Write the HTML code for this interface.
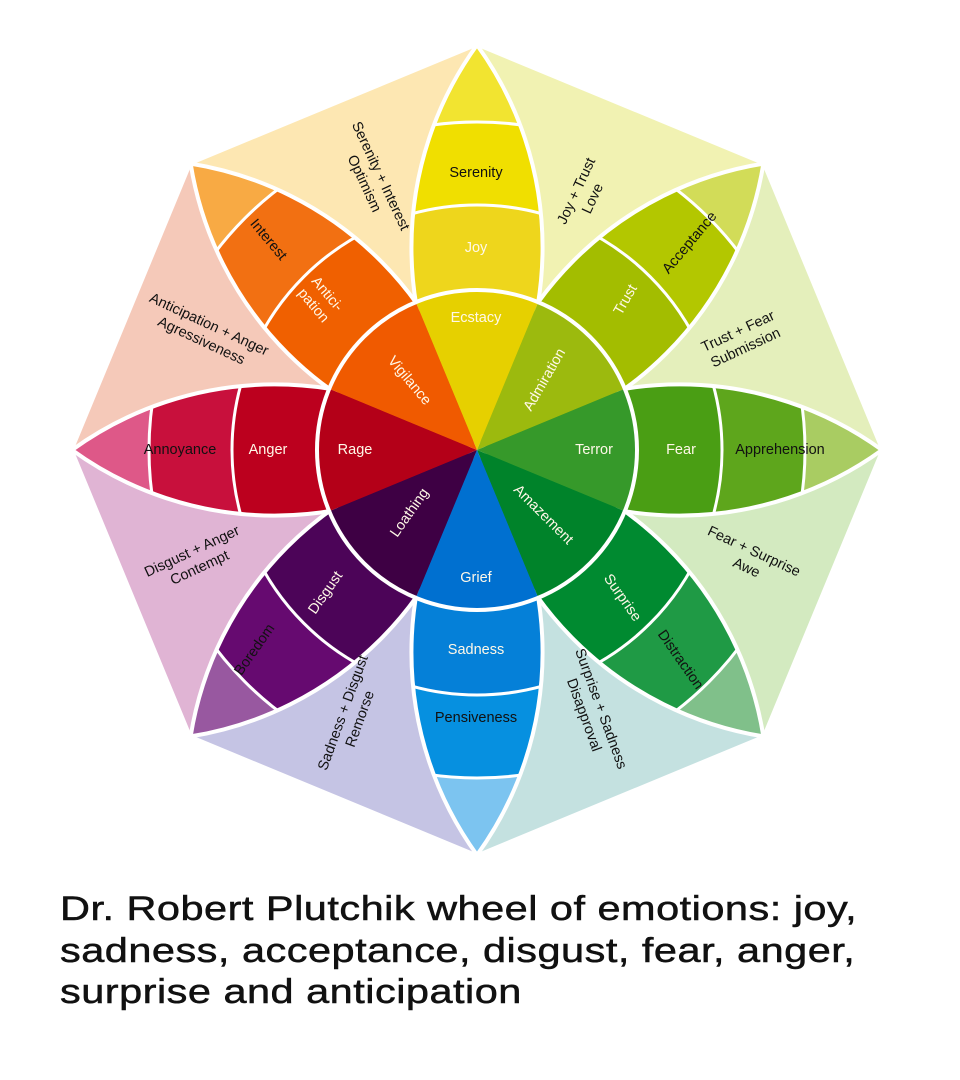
<!DOCTYPE html>
<html><head><meta charset="utf-8"><style>
html,body{margin:0;padding:0;background:#fff;width:960px;height:1080px;overflow:hidden}
svg text{font-family:"Liberation Sans",sans-serif;font-size:14.5px;text-anchor:middle;dominant-baseline:middle}
.w{fill:#fff8e8}
.cap{position:absolute;left:60px;top:889px;font-family:"Liberation Sans",sans-serif;font-size:34px;line-height:41.5px;color:#111;-webkit-text-stroke:0.5px #111;letter-spacing:0.4px;transform:scaleX(1.22);transform-origin:0 0;white-space:nowrap}
</style></head><body>
<svg width="960" height="880" viewBox="0 0 960 880" style="position:absolute;left:0;top:0">
<defs>
<path id="lens" d="M0,0 A345.5,345.5 0 0 1 405,0 A345.5,345.5 0 0 1 0,0 Z"/>
<clipPath id="lc"><use href="#lens"/></clipPath>
</defs>
<g transform="translate(477,450)">
<g stroke="#fff" stroke-width="3">
<path d="M0,0 L0,-405 L286.4,-286.4 Z" fill="#f1f2b2"/>
<path d="M0,0 L286.4,-286.4 L405,0 Z" fill="#e4efbb"/>
<path d="M0,0 L405,0 L286.4,286.4 Z" fill="#d3eac0"/>
<path d="M0,0 L286.4,286.4 L0,405 Z" fill="#c4e1e0"/>
<path d="M0,0 L0,405 L-286.4,286.4 Z" fill="#c5c4e4"/>
<path d="M0,0 L-286.4,286.4 L-405,0 Z" fill="#e0b4d4"/>
<path d="M0,0 L-405,0 L-286.4,-286.4 Z" fill="#f5c9b9"/>
<path d="M0,0 L-286.4,-286.4 L0,-405 Z" fill="#fde7b2"/>
</g>
<g>
<g transform="rotate(-90)"><g clip-path="url(#lc)"><rect x="0" y="-80" width="420" height="160" fill="#f2e430"/><circle r="328" fill="#f0df00" stroke="#fff" stroke-width="3"/><circle r="245" fill="#eed61c" stroke="#fff" stroke-width="3"/></g><use href="#lens" fill="none" stroke="#fff" stroke-width="4"/></g>
<g transform="rotate(-45)"><g clip-path="url(#lc)"><rect x="0" y="-80" width="420" height="160" fill="#d2dc58"/><circle r="328" fill="#b3c700" stroke="#fff" stroke-width="3"/><circle r="245" fill="#a3bd00" stroke="#fff" stroke-width="3"/></g><use href="#lens" fill="none" stroke="#fff" stroke-width="4"/></g>
<g transform="rotate(0)"><g clip-path="url(#lc)"><rect x="0" y="-80" width="420" height="160" fill="#a9cc62"/><circle r="328" fill="#5ea61c" stroke="#fff" stroke-width="3"/><circle r="245" fill="#4a9e14" stroke="#fff" stroke-width="3"/></g><use href="#lens" fill="none" stroke="#fff" stroke-width="4"/></g>
<g transform="rotate(45)"><g clip-path="url(#lc)"><rect x="0" y="-80" width="420" height="160" fill="#80c08a"/><circle r="328" fill="#1f9a45" stroke="#fff" stroke-width="3"/><circle r="245" fill="#008a30" stroke="#fff" stroke-width="3"/></g><use href="#lens" fill="none" stroke="#fff" stroke-width="4"/></g>
<g transform="rotate(90)"><g clip-path="url(#lc)"><rect x="0" y="-80" width="420" height="160" fill="#7cc4f0"/><circle r="328" fill="#0690e0" stroke="#fff" stroke-width="3"/><circle r="245" fill="#0580d8" stroke="#fff" stroke-width="3"/></g><use href="#lens" fill="none" stroke="#fff" stroke-width="4"/></g>
<g transform="rotate(135)"><g clip-path="url(#lc)"><rect x="0" y="-80" width="420" height="160" fill="#9858a0"/><circle r="328" fill="#660a70" stroke="#fff" stroke-width="3"/><circle r="245" fill="#4c0458" stroke="#fff" stroke-width="3"/></g><use href="#lens" fill="none" stroke="#fff" stroke-width="4"/></g>
<g transform="rotate(180)"><g clip-path="url(#lc)"><rect x="0" y="-80" width="420" height="160" fill="#de5888"/><circle r="328" fill="#c8103c" stroke="#fff" stroke-width="3"/><circle r="245" fill="#bc001e" stroke="#fff" stroke-width="3"/></g><use href="#lens" fill="none" stroke="#fff" stroke-width="4"/></g>
<g transform="rotate(225)"><g clip-path="url(#lc)"><rect x="0" y="-80" width="420" height="160" fill="#f8aa44"/><circle r="328" fill="#f27012" stroke="#fff" stroke-width="3"/><circle r="245" fill="#f06000" stroke="#fff" stroke-width="3"/></g><use href="#lens" fill="none" stroke="#fff" stroke-width="4"/></g>
</g>
<g>
<path d="M0,0 L-61.2,-147.8 A160,160 0 0 1 61.2,-147.8 Z" fill="#e6d000"/>
<path d="M0,0 L61.2,-147.8 A160,160 0 0 1 147.8,-61.2 Z" fill="#9cba0e"/>
<path d="M0,0 L147.8,-61.2 A160,160 0 0 1 147.8,61.2 Z" fill="#36992a"/>
<path d="M0,0 L147.8,61.2 A160,160 0 0 1 61.2,147.8 Z" fill="#00832a"/>
<path d="M0,0 L61.2,147.8 A160,160 0 0 1 -61.2,147.8 Z" fill="#0070d0"/>
<path d="M0,0 L-61.2,147.8 A160,160 0 0 1 -147.8,61.2 Z" fill="#3e0044"/>
<path d="M0,0 L-147.8,61.2 A160,160 0 0 1 -147.8,-61.2 Z" fill="#b40018"/>
<path d="M0,0 L-147.8,-61.2 A160,160 0 0 1 -61.2,-147.8 Z" fill="#f05a00"/>
<circle r="160" fill="none" stroke="#fff" stroke-width="4"/>
</g>
</g>
<g>
<text x="476" y="173" fill="#111">Serenity</text>
<text x="476" y="248" class="w">Joy</text>
<text x="476" y="318" class="w">Ecstacy</text>
<text x="626" y="300" class="w" transform="rotate(-60 626 300)">Trust</text>
<text x="690" y="243" fill="#111" transform="rotate(-50 690 243)">Acceptance</text>
<text x="545" y="380" class="w" transform="rotate(-60 545 380)">Admiration</text>
<text x="594" y="450" class="w">Terror</text>
<text x="681" y="450" class="w">Fear</text>
<text x="780" y="450" fill="#111">Apprehension</text>
<text x="543" y="515" class="w" transform="rotate(45 543 515)">Amazement</text>
<text x="622" y="598" class="w" transform="rotate(55 622 598)">Surprise</text>
<text x="680" y="660" fill="#111" transform="rotate(55 680 660)">Distraction</text>
<text x="476" y="578" class="w">Grief</text>
<text x="476" y="650" class="w">Sadness</text>
<text x="476" y="718" fill="#111">Pensiveness</text>
<text x="410" y="513" class="w" transform="rotate(-55 410 513)">Loathing</text>
<text x="326" y="593" class="w" transform="rotate(-55 326 593)">Disgust</text>
<text x="255" y="650" fill="#111" transform="rotate(-55 255 650)">Boredom</text>
<text x="355" y="450" class="w">Rage</text>
<text x="268" y="450" class="w">Anger</text>
<text x="180" y="450" fill="#111">Annoyance</text>
<text x="409" y="381" class="w" transform="rotate(50 409 381)">Vigilance</text>
<text x="320" y="300" class="w" transform="rotate(50 320 300)"><tspan x="320" dy="-9">Antici-</tspan><tspan x="320" dy="18">pation</tspan></text>
<text x="268" y="240" fill="#111" transform="rotate(50 268 240)">Interest</text>
<g fill="#111">
<text transform="translate(372,180) rotate(65)"><tspan x="0" y="-9">Serenity + Interest</tspan><tspan x="0" y="9">Optimism</tspan></text>
<text transform="translate(585,195) rotate(-65)"><tspan x="0" y="-9">Joy + Trust</tspan><tspan x="0" y="9">Love</tspan></text>
<text transform="translate(742,340) rotate(-25)"><tspan x="0" y="-9">Trust + Fear</tspan><tspan x="0" y="9">Submission</tspan></text>
<text transform="translate(750,560) rotate(25)"><tspan x="0" y="-9">Fear + Surprise</tspan><tspan x="0" y="9">Awe</tspan></text>
<text transform="translate(592,712) rotate(70)"><tspan x="0" y="-9">Surprise + Sadness</tspan><tspan x="0" y="9">Disapproval</tspan></text>
<text transform="translate(352,716) rotate(-70)"><tspan x="0" y="-9">Sadness + Disgust</tspan><tspan x="0" y="9">Remorse</tspan></text>
<text transform="translate(196,560) rotate(-25)"><tspan x="0" y="-9">Disgust + Anger</tspan><tspan x="0" y="9">Contempt</tspan></text>
<text transform="translate(205,333) rotate(25)"><tspan x="0" y="-9">Anticipation + Anger</tspan><tspan x="0" y="9">Agressiveness</tspan></text>
</g>
</g>
</svg>
<div class="cap">Dr. Robert Plutchik wheel of emotions: joy,<br>sadness, acceptance, disgust, fear, anger,<br>surprise and anticipation</div>
</body></html>
